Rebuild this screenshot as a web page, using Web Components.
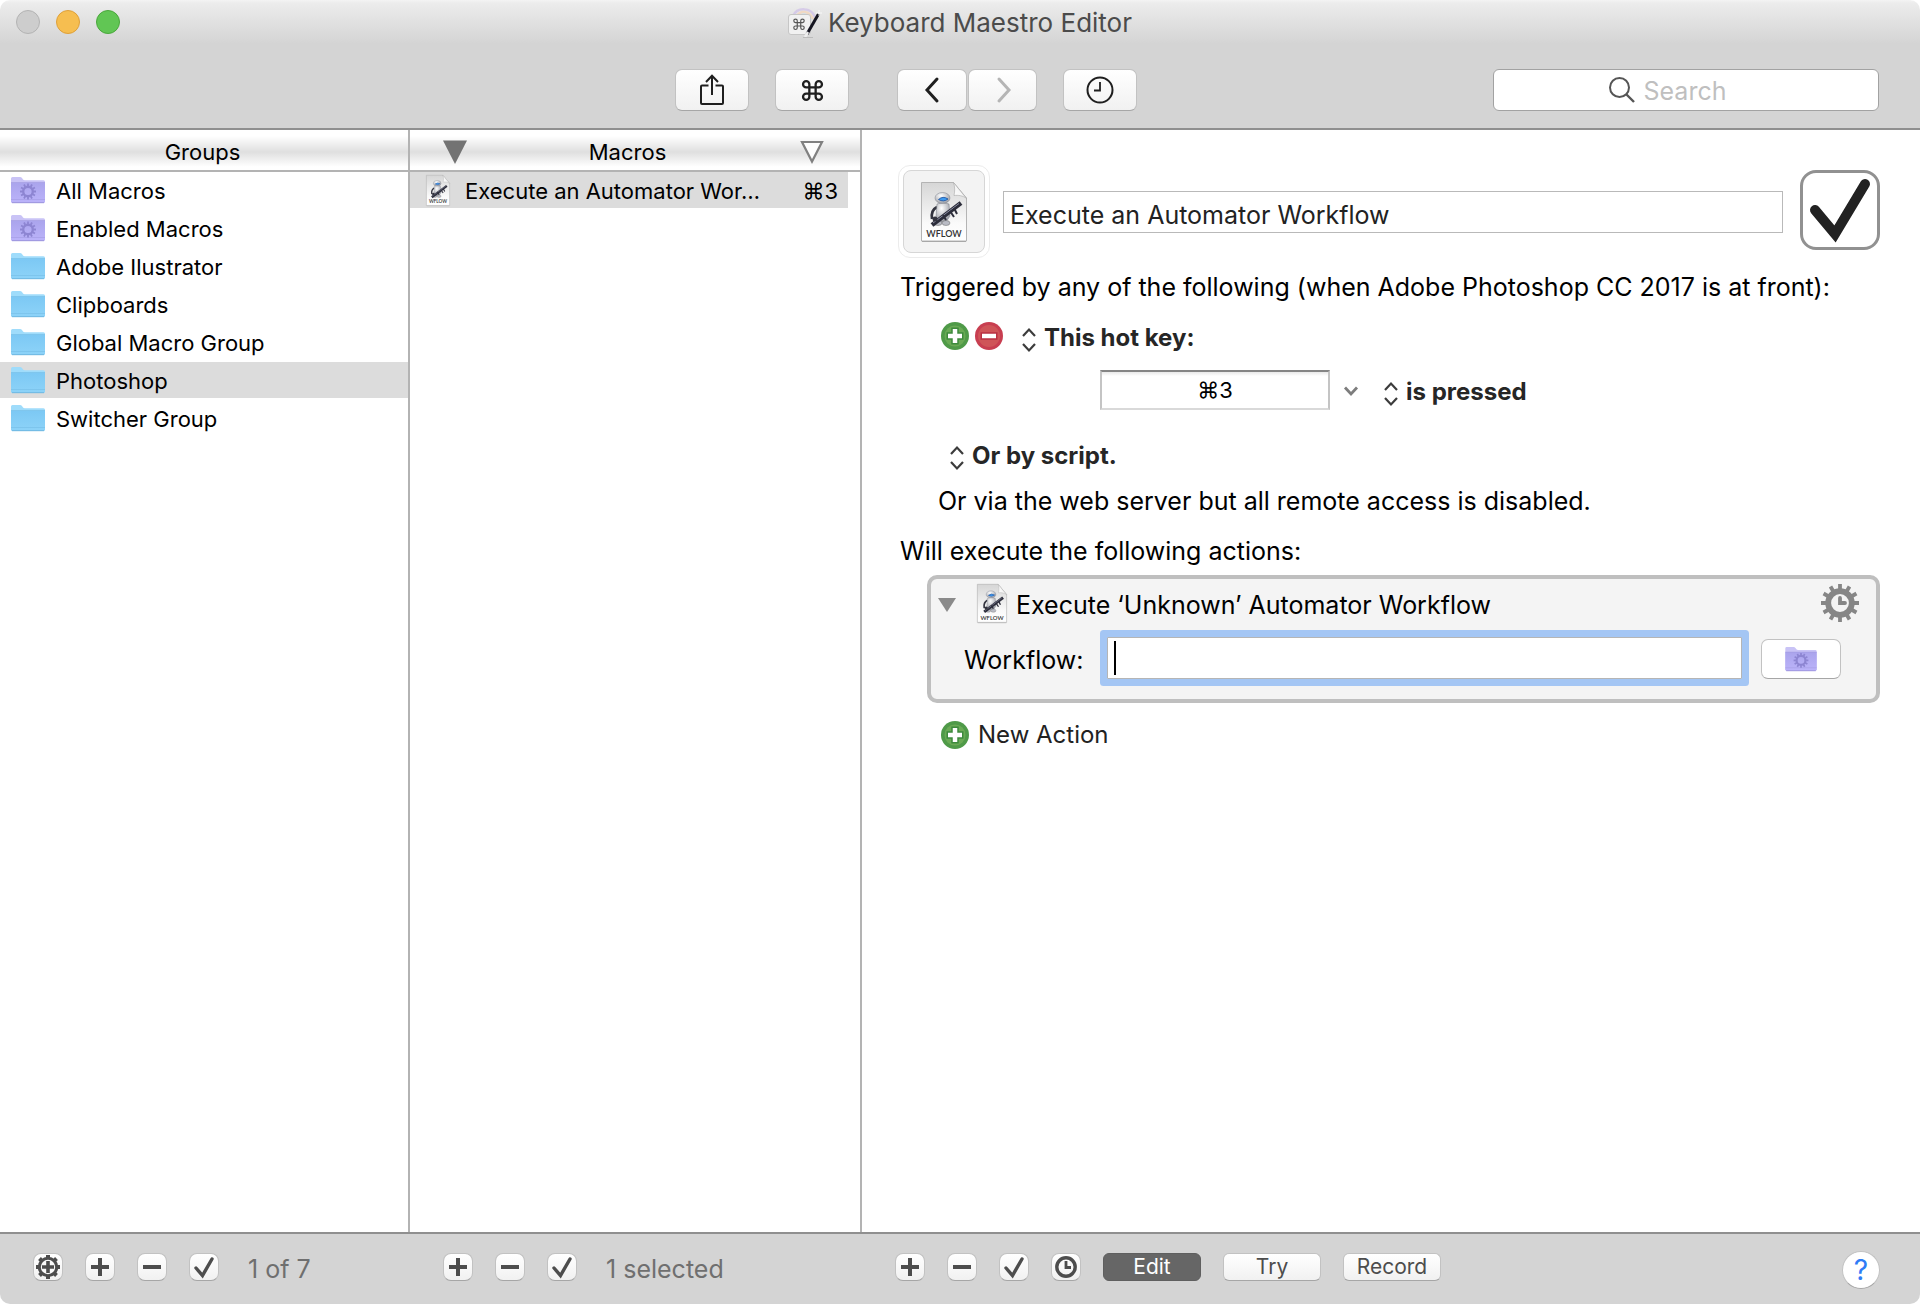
<!DOCTYPE html>
<html lang="en">
<head>
<meta charset="utf-8">
<title>Keyboard Maestro Editor</title>
<style>
  html, body { margin: 0; height: 100%; background: #fff; }
  body {
    font-family: Inter, Roboto, "Liberation Sans", sans-serif;
    --groups-width: 410px;
    --macros-width: 452px;
    --chrome: #d4d4d4;
    --rule: #8f8f8f;
    --divider: #b3b3b3;
    --selected: #dcdcdc;
    --text-button: 21px;
    --text-list: 22px;
    --text-bold: 24px;
    --text-body: 25px;
    --text-title: 26px;
  }
</style>
</head>
<body>
<km-window></km-window>

<script>
const BASE = `
  *, *::before, *::after { box-sizing: border-box; }
  button, input, select { font: inherit; color: inherit; margin: 0; }
  button { padding: 0; border: 0; background: none; display: flex; align-items: center; justify-content: center; }
`;

function define(name, html) {
  customElements.define(name, class extends HTMLElement {
    constructor() {
      super();
      this.attachShadow({ mode: 'open' });
    }
    connectedCallback() {
      const body = typeof html === 'function' ? html(this) : html;
      this.shadowRoot.innerHTML = `<style>${BASE}</style>${body}`;
    }
  });
}

// Ring of teeth around a hub, as short thick strokes.
function gearTeeth(count, cx, cy, inner, outer) {
  let d = '';
  for (let i = 0; i < count; i++) {
    const a = i * 2 * Math.PI / count;
    const s = Math.sin(a), c = Math.cos(a);
    d += `M${(cx + inner * s).toFixed(2)} ${(cy - inner * c).toFixed(2)}L${(cx + outer * s).toFixed(2)} ${(cy - outer * c).toFixed(2)}`;
  }
  return d;
}

const COMMAND_PATH = 'M7 7V4a3 3 0 1 0-3 3h12a3 3 0 1 0-3-3v12a3 3 0 1 0 3-3H4a3 3 0 1 0 3 3V7';

const folder = (top, face, low, edge, extra) => `
  <defs><linearGradient id="f" x1="0" y1="0" x2="0" y2="1"><stop offset="0" stop-color="${face}"/><stop offset="1" stop-color="${low}"/></linearGradient></defs>
  <path d="M0 1.5Q0 0 1.5 0H9q1.200 0 2 1l1 1.500q.6.8 1.800.8H32.500Q34 3.300 34 4.800V25H0z" fill="${top}"/>
  <path d="M0 5.500H34V24.500q0 1.500-1.500 1.500H1.500Q0 26 0 24.500z" fill="url(#f)"/>
  <path d="M0 5.500H34M0 22.500H34" stroke="${edge}" stroke-width=".8" opacity=".55"/>
  <path d="M1 25.700H33" stroke="${edge}" stroke-width="1"/>${extra}`;

const ICONS = {
  folder: [34, 26, '0 0 34 26', folder('#9fdcfb', '#7cc8f4', '#8dd3f8', '#6fb7e0', '')],
  smart: [34, 26, '0 0 34 26', folder('#c9c3f6', '#aaa4ec', '#bbb3fa', '#9c94dc', `
    <path d="${gearTeeth(12, 17, 14.5, 5.5, 8)}" stroke="#8d85d2" stroke-width="1.800"/>
    <circle cx="17" cy="14.500" r="4.800" fill="none" stroke="#8d85d2" stroke-width="2.400"/>`)],
  workflow: [46, 60, '0 0 46 60', `
    <defs>
      <linearGradient id="p" x1="0" y1="0" x2="0" y2="1"><stop offset="0" stop-color="#d6d6d6"/><stop offset=".7" stop-color="#fafafa"/><stop offset="1" stop-color="#fff"/></linearGradient>
      <linearGradient id="c" x1="0" y1="1" x2="1" y2="0"><stop offset="0" stop-color="#fff"/><stop offset=".5" stop-color="#f4f4f4"/><stop offset="1" stop-color="#9c9c9c"/></linearGradient>
      <radialGradient id="h" cx=".4" cy=".3" r=".8"><stop offset="0" stop-color="#fff"/><stop offset="1" stop-color="#8d9099"/></radialGradient>
    </defs>
    <path d="M1 59.500H45" stroke="#9a9a9a" stroke-width="1"/>
    <path d="M.5.5H32.500L45.500 16V59H.5z" fill="url(#p)" stroke="#b4b4b4"/>
    <path d="M32.500.5C34 5 34 9 33 13.500c4-.5 9 0 12.500 3z" fill="url(#c)" stroke="#a8a8a8" stroke-width=".6"/>
    <path d="M16 25c-4 2-6 6-5 12" fill="none" stroke="#33343f" stroke-width="2.600"/>
    <path d="M16 22q6-3 12 0l1 12-4 6h-6l-4-5z" fill="url(#h)" stroke="#777a85" stroke-width=".5"/>
    <ellipse cx="17" cy="41" rx="4" ry="2.500" fill="#b9bbc4" stroke="#666" stroke-width=".5"/>
    <ellipse cx="25" cy="41" rx="4" ry="2.500" fill="#b9bbc4" stroke="#666" stroke-width=".5"/>
    <ellipse cx="21.500" cy="16" rx="7.500" ry="5.500" fill="url(#h)" stroke="#81848e" stroke-width=".5"/>
    <path d="M17.500 17.500q4.500-4 9.500-.5-4.500 3.500-9.500.5z" fill="#3f9bf0" stroke="#1d4f9c" stroke-width=".8"/>
    <path d="M11 43 40 21" stroke="#2c2d3a" stroke-width="4.500"/>
    <path d="M12 41 38 21.500" stroke="#8b8da3" stroke-width="1"/>
    <path d="M29 29l4 6M33 26l3 6M22 33l3 5" stroke="#2c2d3a" stroke-width="2"/>
    <circle cx="14" cy="37" r="2.500" fill="#33343f"/>
    <text x="23" y="55" text-anchor="middle" font-size="9" font-weight="600" font-family="Lato, sans-serif" fill="#333">WFLOW</text>`],
  app: [34, 30, '0 0 34 30', `
    <path d="M5 8C9-1 23-1 27 9" fill="none" stroke="#c9b8e8" stroke-width="2.500" opacity=".6"/>
    <path d="M8 9C12 2 21 2 25 11" fill="none" stroke="#f3d3b5" stroke-width="2.500" opacity=".7"/>
    <path d="M10 10C13 5 20 5 23 12" fill="none" stroke="#b9dcf0" stroke-width="2" opacity=".8"/>
    <rect x=".5" y="6.500" width="22" height="20" rx="2.500" fill="#f1f1f1" stroke="#c6c6c6"/>
    <g transform="translate(5.200 10.500) scale(.58)"><path d="${COMMAND_PATH}" fill="none" stroke="#555" stroke-width="2"/></g>
    <path d="M19 26 30.500 6" stroke="#151520" stroke-width="3"/>
    <path d="M17 29 20 24" stroke="#eee" stroke-width="2.500"/>
    <path d="M31 2v6M28 5h6" stroke="#fff" stroke-width="1" opacity=".8"/>
    <path d="M15 29.500h10" stroke="#bbb" stroke-width="1"/>`],
  share: [24, 32, '0 0 24 32', `<path d="M8.500 11.500H2q-1 0-1 1V29q0 1 1 1H22q1 0 1-1V12.500q0-1-1-1H15.500M12 21V2M6 8 12 1.800 18 8" fill="none" stroke="#1f1f1f" stroke-width="2"/>`],
  command: [21, 21, '0 0 20 20', `<path d="${COMMAND_PATH}" fill="none" stroke="#1f1f1f" stroke-width="2.200"/>`],
  back: [16, 26, '0 0 16 26', `<path d="M13 2 3 13 13 24" fill="none" stroke="#1f1f1f" stroke-width="3" stroke-linecap="round"/>`],
  forward: [16, 26, '0 0 16 26', `<path d="M4 2 14 13 4 24" fill="none" stroke="#b5b5b5" stroke-width="3" stroke-linecap="round"/>`],
  clock: [28, 28, '0 0 28 28', `<circle cx="14" cy="14" r="12.500" fill="none" stroke="#1f1f1f" stroke-width="2"/><path d="M14 6V14.500H8" fill="none" stroke="#1f1f1f" stroke-width="1.800"/>`],
  search: [26, 26, '0 0 26 26', `<circle cx="10.500" cy="10.500" r="9.500" fill="none" stroke="#555" stroke-width="2"/><path d="M17.500 17.500 25 25" stroke="#555" stroke-width="2.400"/>`],
  sortFilled: [24, 24, '0 0 24 24', `<path d="M0 .5H24L12 24z" fill="#737373"/>`],
  sortHollow: [24, 24, '0 0 24 24', `<path d="M2 2H22L12 21.500z" fill="#fdfdfd" stroke="#808080" stroke-width="2.200"/>`],
  bigCheck: [74, 74, '0 0 74 74', `<path d="M12 37 32 61 62 11" fill="none" stroke="#222" stroke-width="10" stroke-linecap="round"/>`],
  add: [28, 28, '0 0 28 28', `<circle cx="14" cy="14" r="14" fill="#4f9a48"/><circle cx="14" cy="14" r="10.500" fill="#6aaa55"/><path d="M14 5.500v17M5.500 14h17" stroke="#3d8a3c" stroke-width="7.500"/><path d="M14 7v14M7 14h14" stroke="#fff" stroke-width="4.500"/>`],
  remove: [28, 28, '0 0 28 28', `<circle cx="14" cy="14" r="14" fill="#c83e50"/><circle cx="14" cy="14" r="11" fill="#cf5458"/><path d="M5.500 14h17" stroke="#b92f42" stroke-width="7.500"/><path d="M7 14h14" stroke="#fff" stroke-width="4.500"/>`],
  updown: [14, 24, '0 0 14 24', `<path d="M1 8 7 1.500 13 8M1 16 7 22.500 13 16" fill="none" stroke="#3c3c3c" stroke-width="2.200"/>`],
  chevron: [14, 10, '0 0 14 10', `<path d="M1 1.500 7 8 13 1.500" fill="none" stroke="#7d7d7d" stroke-width="2.800"/>`],
  disclosure: [18, 14, '0 0 18 14', `<path d="M0 0H18L9 14z" fill="#8a8a8a"/>`],
  gearClock: [38, 38, '0 0 38 38', `
    <path d="${gearTeeth(12, 19, 19, 13, 19)}" stroke="#868686" stroke-width="3.800"/>
    <circle cx="19" cy="19" r="11.800" fill="none" stroke="#868686" stroke-width="5.800"/>
    <path d="M19 14V19H24" fill="none" stroke="#868686" stroke-width="3.800" stroke-linecap="round"/>`],
  gearPlus: [24, 24, '0 0 24 24', `
    <path d="${gearTeeth(8, 12, 12, 8, 12)}" stroke="#4d4d4d" stroke-width="4"/>
    <circle cx="12" cy="12" r="8.700" fill="#fafafa" stroke="#4d4d4d" stroke-width="3"/>
    <path d="M12 6v12M6 12h12" stroke="#4d4d4d" stroke-width="3.600"/>`],
  plus: [18, 18, '0 0 18 18', `<path d="M9 0v18M0 9h18" stroke="#4d4d4d" stroke-width="4"/>`],
  minus: [18, 18, '0 0 18 18', `<path d="M0 9h18" stroke="#4d4d4d" stroke-width="4"/>`],
  check: [22, 24, '0 0 22 24', `<path d="M3 13 9.500 20.500 19 4" fill="none" stroke="#4d4d4d" stroke-width="3.400" stroke-linecap="round"/>`],
  smallClock: [22, 22, '0 0 22 22', `<circle cx="11" cy="11" r="9.200" fill="none" stroke="#4d4d4d" stroke-width="3.400"/><path d="M11 5V11.500H16" fill="none" stroke="#4d4d4d" stroke-width="2.800"/>`],
};

define('km-icon', (el) => {
  const [w, h, box, art] = ICONS[el.getAttribute('name')];
  const width = Number(el.getAttribute('width')) || w;
  const height = Math.round(width * h / w);
  return `<style>:host { display: block; flex: none; } svg { display: block; overflow: visible; }</style>
    <svg width="${width}" height="${height}" viewBox="${box}" aria-hidden="true">${art}</svg>`;
});

define('km-button', (el) => `
  <style>
    :host { display: block; flex: none; }
    button {
      width: 100%; height: var(--button-height, 42px);
      border: 1px solid #c2c2c2; border-bottom-color: #a6a6a6; border-radius: var(--button-radius, 7px);
      background: var(--button-face, linear-gradient(#fff, #f1f1f1));
    }
    :host([tone="dark"]) button { background: #666; border-color: #5f5f5f; color: #fff; }
  </style>
  <button type="button" ${el.hasAttribute('label') ? `aria-label="${el.getAttribute('label')}"` : ''}><slot></slot></button>`);

define('km-popup', (el) => `
  <style>
    :host { display: flex; align-items: center; gap: 8px; padding-top: 3px; font-size: var(--text-bold); font-weight: 700; color: #262626; }
    km-icon { padding-top: 4px; }
    select { appearance: none; border: 0; padding: 0; background: none; height: 32px; line-height: 32px; }
  </style>
  <km-icon name="updown"></km-icon>
  <select aria-label="${el.getAttribute('label')}"><option>${el.getAttribute('value')}</option></select>`);

define('km-titlebar', `
  <style>
    :host { display: grid; grid-template-columns: 1fr auto 1fr; align-items: center; height: 44px; padding: 0 16px; background: linear-gradient(#f4f4f4, #ececec 3px, #d4d4d4); }
    .lights { display: flex; gap: 16px; }
    .lights button { width: 24px; height: 24px; border-radius: 50%; border: 1px solid #b3b3b3; background: #cdcdcd; }
    .lights .min { background: #f6be50; border-color: #dea03a; }
    .lights .max { background: #61c654; border-color: #4aa73c; }
    h1 { display: flex; align-items: center; gap: 6px; margin: 0; padding-top: 2px; font-size: var(--text-title); font-weight: 400; line-height: 32px; color: #4b4b4b; }
  </style>
  <div class="lights">
    <button type="button" aria-label="Close"></button>
    <button type="button" class="min" aria-label="Minimize"></button>
    <button type="button" class="max" aria-label="Zoom"></button>
  </div>
  <h1><km-icon name="app"></km-icon><slot></slot></h1>`);

define('km-toolbar', `
  <style>
    :host { display: grid; grid-template-columns: calc(var(--groups-width) + var(--macros-width)) 1fr; height: 84px; padding-bottom: 17px; align-items: end; background: var(--chrome); }
    .left { display: flex; justify-content: flex-end; gap: 26px; padding-right: 13px; }
    .right { display: flex; align-items: center; padding: 0 41px 0 35px; }
    km-button { width: 74px; }
    .nav { display: flex; gap: 1px; margin-right: 26px; }
    .nav km-button { width: 69px; }
    .nav km-button:first-child { width: 70px; }
    label { margin-left: auto; width: 386px; height: 42px; padding-right: 30px; display: flex; align-items: center; justify-content: center; gap: 9px; background: #fff; border: 1px solid #a2a2a2; border-radius: 6px; }
    input { width: 90px; height: 34px; border: 0; padding: 2px 0 0; outline: 0; background: none; font-size: var(--text-body); }
    input::placeholder { color: #bfbfbf; opacity: 1; }
    input::-webkit-search-cancel-button { display: none; }
  </style>
  <div class="left">
    <km-button label="Share"><km-icon name="share"></km-icon></km-button>
    <km-button label="Commands"><km-icon name="command"></km-icon></km-button>
  </div>
  <div class="right">
    <div class="nav">
      <km-button label="Back"><km-icon name="back"></km-icon></km-button>
      <km-button label="Forward"><km-icon name="forward"></km-icon></km-button>
    </div>
    <km-button label="History"><km-icon name="clock"></km-icon></km-button>
    <label><km-icon name="search"></km-icon><input type="search" aria-label="Search" placeholder="Search"></label>
  </div>`);

define('km-column', `
  <style>
    :host { display: flex; flex-direction: column; border-right: 2px solid var(--divider); font-size: var(--text-list); line-height: 36px; color: #000; }
    header { display: grid; grid-template-columns: 24px 1fr 24px; align-items: center; height: 42px; padding: 4px 36px 0 33px; border-bottom: 2px solid var(--divider); background: linear-gradient(#fff 15%, #dfdfdf 55%, #fff 92%); }
    h2 { grid-column: 2; grid-row: 1; margin: 0; font-size: inherit; font-weight: 400; line-height: 36px; text-align: center; }
    :host([scroller]) h2 { padding-right: 12px; }
    slot[name="start"] { display: block; grid-column: 1; }
    slot[name="end"] { display: block; grid-column: 3; }
    .rows { display: flex; flex-direction: column; gap: 2px; }
  </style>
  <header><slot name="start"></slot><h2><slot name="title"></slot></h2><slot name="end"></slot></header>
  <div class="rows"><slot></slot></div>`);

define('km-sort', (el) => `
  <style>:host { display: block; }</style>
  <button type="button" aria-label="${el.getAttribute('label')}"><km-icon name="${el.getAttribute('icon')}"></km-icon></button>`);

define('km-group-row', (el) => `
  <style>
    :host { display: flex; align-items: center; gap: 11px; height: 36px; padding: 0 11px; }
    :host([selected]) { background: var(--selected); }
    span { padding-top: 2px; }
  </style>
  <km-icon name="${el.getAttribute('icon') || 'folder'}"></km-icon><span><slot></slot></span>`);

define('km-macro-row', (el) => `
  <style>
    :host { display: flex; align-items: center; height: 36px; padding: 0 10px 0 16px; margin-right: 12px; background: var(--selected); }
    .name { flex: 1; padding-left: 15px; white-space: nowrap; }
    span { padding-top: 2px; }
  </style>
  <km-icon name="workflow" width="24"></km-icon><span class="name"><slot></slot></span><span>${el.getAttribute('shortcut')}</span>`);

define('km-action', `
  <style>
    :host { display: block; border: 4px solid #bfbfbf; border-radius: 10px; background: #f4f4f4; padding: 5px 17px 13px 7px; }
    .head { display: flex; align-items: center; height: 38px; }
    .fold { margin-right: 21px; padding-top: 4px; }
    .title { flex: 1; padding: 3px 0 0 9px; }
    .field { display: flex; align-items: center; margin-top: 8px; padding: 0 18px 0 26px; }
    label { padding-top: 4px; }
    input {
      flex: 1; min-width: 0; height: 42px; margin: 7px 7px 7px 24px; padding: 0 8px; border: 1px solid #b5b5b5; caret-color: transparent;
      outline: 0; box-shadow: 0 0 0 7px #a4c6f4; border-radius: 1px;
      background: linear-gradient(#000, #000) 6px center / 2px 34px no-repeat #fff;
    }
    km-button { width: 80px; margin-left: 12px; padding-top: 2px; --button-height: 40px; --button-face: #fff; }
  </style>
  <div class="head">
    <button type="button" class="fold" aria-label="Collapse action"><km-icon name="disclosure"></km-icon></button>
    <km-icon name="workflow" width="30"></km-icon>
    <span class="title"><slot></slot></span>
    <button type="button" aria-label="Action options"><km-icon name="gearClock"></km-icon></button>
  </div>
  <div class="field">
    <label for="path">Workflow:</label>
    <input id="path" type="text">
    <km-button label="Choose workflow"><km-icon name="smart" width="32"></km-icon></km-button>
  </div>`);

define('km-editor', `
  <style>
    :host { display: block; padding: 35px 40px 0 36px; font-size: var(--text-body); line-height: 32px; color: #000; }
    .head { display: flex; align-items: center; height: 93px; }
    .well { width: 92px; height: 93px; padding: 4px; border: 1px solid #ececec; border-radius: 12px; }
    .well button { width: 100%; height: 100%; border: 1px solid #d6d6d6; border-radius: 8px; background: #f3f3f3; }
    .name { flex: 1; min-width: 0; height: 42px; margin: 0 17px 0 13px; padding: 6px 6px 0; border: 1px solid #b9b9b9; outline: 0; color: #222; }
    .enabled { position: relative; display: block; width: 80px; height: 80px; margin-bottom: 3px; border: 3px solid #919191; border-radius: 16px; }
    .enabled input { position: absolute; inset: 0; width: 100%; height: 100%; opacity: 0; }
    p { margin: 0; padding-left: 2px; }
    .row { display: flex; align-items: center; height: 32px; }
    .intro { margin-top: 13px; }
    .hot { margin-top: 17px; padding-left: 43px; }
    .hot button + button { margin: 0 19px 0 6px; }
    .keys { height: 40px; margin-top: 18px; padding-left: 202px; }
    .keys input { width: 230px; height: 40px; border: 2px solid #c4c4c4; border-top: 2px solid #858585; border-bottom-color: #d9d9d9; text-align: center; font-size: var(--text-list); padding: 0; outline: 0; background: linear-gradient(#e9e9e9, #fff 4px); }
    .keys button { margin: 0 26px 0 14px; padding-top: 2px; }
    .script { margin-top: 28px; padding-left: 52px; }
    .web { margin-top: 15px; padding-left: 40px; }
    .will { margin-top: 18px; }
    km-action { margin: 8px 0 0 29px; }
    .new { margin-top: 16px; padding-left: 43px; }
    .new button { gap: 9px; height: 32px; color: #222; font-size: var(--text-bold); }
  </style>
  <div class="head">
    <div class="well"><button type="button" aria-label="Macro icon"><km-icon name="workflow"></km-icon></button></div>
    <input class="name" type="text" aria-label="Macro name" value="Execute an Automator Workflow">
    <label class="enabled"><input type="checkbox" checked aria-label="Macro enabled"><km-icon name="bigCheck"></km-icon></label>
  </div>
  <p class="intro">Triggered by any of the following (when Adobe Photoshop CC 2017 is at front):</p>
  <div class="row hot">
    <button type="button" aria-label="Add trigger"><km-icon name="add"></km-icon></button>
    <button type="button" aria-label="Remove trigger"><km-icon name="remove"></km-icon></button>
    <km-popup label="Trigger type" value="This hot key:"></km-popup>
  </div>
  <div class="row keys">
    <input type="text" aria-label="Hot key" value="⌘3">
    <button type="button" aria-label="Hot key options"><km-icon name="chevron"></km-icon></button>
    <km-popup label="Key event" value="is pressed"></km-popup>
  </div>
  <div class="row script"><km-popup label="Script trigger" value="Or by script."></km-popup></div>
  <p class="web">Or via the web server but all remote access is disabled.</p>
  <p class="will">Will execute the following actions:</p>
  <km-action>Execute ‘Unknown’ Automator Workflow</km-action>
  <div class="row new"><button type="button"><km-icon name="add"></km-icon>New Action</button></div>`);

define('km-statusbar', `
  <style>
    :host { display: grid; grid-template-columns: var(--groups-width) var(--macros-width) 1fr; height: 72px; border-top: 2px solid var(--rule); background: var(--chrome); font-size: var(--text-body); line-height: 32px; color: #6f6f6f; --button-height: 28px; --button-radius: 8px; }
    section { display: flex; align-items: center; gap: 22px; padding: 0 40px 4px 33px; }
    km-button { width: 30px; }
    .mode { width: 98px; font-size: var(--text-button); color: #4d4d4d; --button-radius: 6px; }
    output { padding: 4px 0 0 7px; }
    .help { width: 38px; margin-left: auto; padding-top: 2px; --button-height: 38px; --button-radius: 50%; --button-face: #fff; color: #2f7cf6; font-size: 28px; }
    section:last-child { padding-bottom: 0; }
    .set { display: flex; gap: 22px; padding-bottom: 4px; }
  </style>
  <section>
    <km-button label="Smart group"><km-icon name="gearPlus"></km-icon></km-button>
    <km-button label="Add group"><km-icon name="plus"></km-icon></km-button>
    <km-button label="Delete group"><km-icon name="minus"></km-icon></km-button>
    <km-button label="Enable group"><km-icon name="check"></km-icon></km-button>
    <output>1 of 7</output>
  </section>
  <section>
    <km-button label="Add macro"><km-icon name="plus"></km-icon></km-button>
    <km-button label="Delete macro"><km-icon name="minus"></km-icon></km-button>
    <km-button label="Enable macro"><km-icon name="check"></km-icon></km-button>
    <output>1 selected</output>
  </section>
  <section>
    <div class="set">
      <km-button label="Add action"><km-icon name="plus"></km-icon></km-button>
      <km-button label="Delete action"><km-icon name="minus"></km-icon></km-button>
      <km-button label="Enable action"><km-icon name="check"></km-icon></km-button>
      <km-button label="Recent"><km-icon name="smallClock"></km-icon></km-button>
      <km-button class="mode" tone="dark">Edit</km-button>
      <km-button class="mode">Try</km-button>
      <km-button class="mode">Record</km-button>
    </div>
    <km-button class="help">?</km-button>
  </section>`);

define('km-window', `
  <style>
    :host { display: flex; flex-direction: column; height: 100vh; border-radius: 10px; overflow: hidden; background: #fff; }
    main { flex: 1; min-height: 0; display: grid; grid-template-columns: var(--groups-width) var(--macros-width) 1fr; border-top: 2px solid var(--rule); }
  </style>
  <km-titlebar>Keyboard Maestro Editor</km-titlebar>
  <km-toolbar></km-toolbar>
  <main>
    <km-column>
      <span slot="title">Groups</span>
      <km-group-row icon="smart">All Macros</km-group-row>
      <km-group-row icon="smart">Enabled Macros</km-group-row>
      <km-group-row>Adobe Ilustrator</km-group-row>
      <km-group-row>Clipboards</km-group-row>
      <km-group-row>Global Macro Group</km-group-row>
      <km-group-row selected>Photoshop</km-group-row>
      <km-group-row>Switcher Group</km-group-row>
    </km-column>
    <km-column scroller>
      <km-sort slot="start" icon="sortFilled" label="Sort by name"></km-sort>
      <span slot="title">Macros</span>
      <km-sort slot="end" icon="sortHollow" label="Sort by trigger"></km-sort>
      <km-macro-row shortcut="⌘3">Execute an Automator Wor…</km-macro-row>
    </km-column>
    <km-editor></km-editor>
  </main>
  <km-statusbar></km-statusbar>`);
</script>
</body>
</html>
